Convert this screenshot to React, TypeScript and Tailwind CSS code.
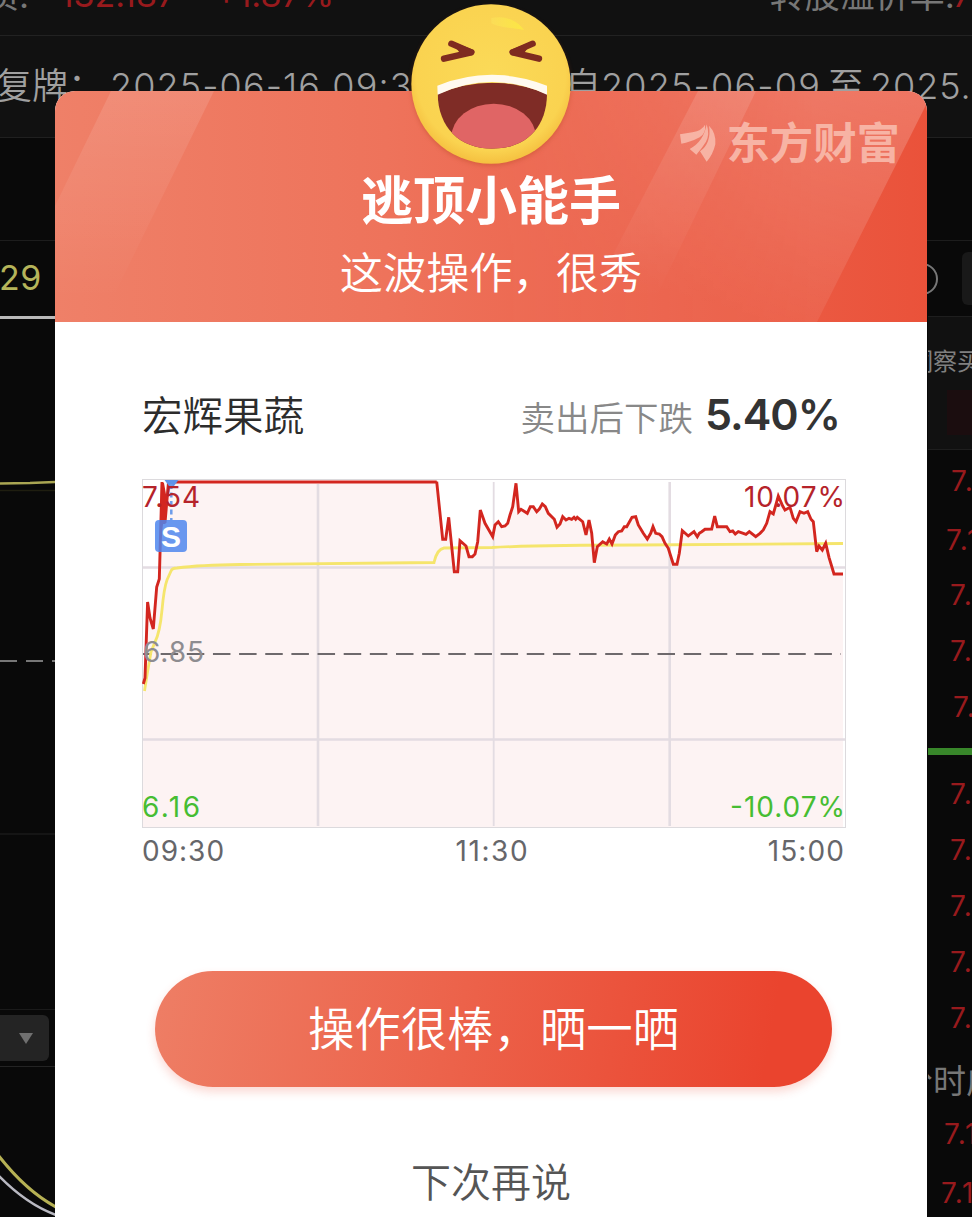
import type { ReactNode } from "react";

const LATIN = "font-['Inter','Noto_Sans_CJK_SC',sans-serif]";

type Point = [number, number];

const toPath = (points: Point[]) => points.map(([x, y]) => `${x.toFixed(1)},${y.toFixed(1)}`).join(" ");
const fromThirds = (points: Point[], ox: number, oy: number): Point[] =>
  points.map(([x, y]) => [ox + x / 3, oy + y / 3]);

const opening: Point[] = [
  [143.3, 684], [145, 678], [147.6, 602], [150, 618], [153.3, 629], [156.7, 587], [159.3, 579],
  [162, 482], [165, 523], [168.5, 482], [436.7, 482],
];

const midday: Point[] = fromThirds(
  [
    [50, 35], [68, 208], [77, 208], [86, 142], [103, 305], [113, 305], [120, 212], [138, 228], [147, 260],
    [157, 260], [165, 252], [173, 215], [181, 120], [195, 160], [218, 200], [225, 165], [235, 155], [245, 170],
    [255, 168], [263, 160], [270, 135], [278, 110], [288, 40], [296, 125], [303, 118], [322, 130], [331, 110],
    [340, 110], [350, 125], [358, 117], [367, 102], [376, 110], [385, 130], [403, 148], [411, 172], [420, 162],
    [428, 140], [438, 150], [447, 145], [455, 148], [462, 142], [467, 148], [472, 142], [488, 155], [498, 195],
    [507, 150], [515, 190], [523, 278], [532, 230], [548, 215], [560, 222], [568, 207], [576, 222], [586, 195],
    [595, 185], [605, 183], [613, 170], [620, 170],
  ],
  420,
  470,
);

const afternoon: Point[] = fromThirds(
  [
    [6, 142], [17, 140], [25, 165], [40, 190], [52, 207], [62, 190], [69, 170], [77, 190], [88, 192], [96, 200],
    [105, 220], [115, 235], [122, 258], [130, 283], [141, 283], [148, 250], [157, 182], [175, 198], [192, 185],
    [202, 200], [208, 190], [215, 185], [225, 178], [245, 177], [254, 138], [262, 170], [290, 170], [300, 185],
    [308, 183], [316, 192], [325, 185], [340, 190], [348, 193], [358, 185], [377, 200], [390, 190], [400, 180],
    [410, 160], [420, 125], [430, 132], [445, 78], [458, 108], [465, 120], [480, 112], [490, 145], [498, 155],
    [510, 125], [522, 130], [533, 125], [543, 148], [550, 155], [560, 245], [567, 228], [577, 240], [587, 220],
    [597, 262], [612, 312], [639, 312],
  ],
  630,
  470,
);

const price: Point[] = [...opening, ...midday, ...afternoon];
const average =
  "M144.500 691L147.500 672L151 652L155 642Q160 632 162 610Q164 588 167 580L171 571Q172 568 177 568Q200 565 240 564.5L434 562.5Q437 549 444 548L492 547.5Q540 545 640 545L843 543.5";

function ChartText(props: { x: number; y: number; w: number; color: string; children: ReactNode }) {
  return (
    <text
      x={props.x}
      y={props.y}
      textLength={props.w}
      lengthAdjust="spacing"
      fill={props.color}
      fontSize="28"
      fontFamily="Inter, 'Liberation Sans', sans-serif"
    >
      {props.children}
    </text>
  );
}

function PriceChart() {
  return (
    <svg className="block h-[350px] w-[706px]" viewBox="141 478 706 350">
      <rect x="142.5" y="479.5" width="703" height="348" fill="#fff" stroke="#dcdadd" />
      <polygon points={`143,827 ${toPath(price)} 843,827`} fill="#fdf3f3" />
      <g stroke="#e3dce2" strokeWidth="2.6">
        <path d="M143 567.5H845M143 739.5H845" />
        <path d="M318 484V826M669.700 482V826" />
        <path d="M493.700 482V826" strokeWidth="1.800" />
      </g>
      <path d="M143 654H841" stroke="#6e696c" strokeWidth="2" strokeDasharray="17.500 8.650" strokeDashoffset="8.500" />
      <path d={average} fill="none" stroke="#f5e56c" strokeWidth="2.800" />
      <polyline points={toPath(price)} fill="none" stroke="#d3261f" strokeWidth="2.900" strokeLinejoin="miter" strokeMiterlimit="3" />
      <path d="M161 483L164 483L167 500L165.500 524L163 524L160 548Z" fill="#d3261f" />
      <path d="M164.500 480H178.500L174 486H169Z" fill="#5f93ea" />
      <path d="M171.300 484V520" stroke="#6c9bea" strokeWidth="2.500" strokeDasharray="5 3.500" />
      <rect x="155" y="520" width="32" height="32" rx="4" fill="#4c86ee" fillOpacity=".84" />
      <text x="171" y="546.500" textAnchor="middle" fill="#fff" fontSize="30" fontWeight="700" fontFamily="'Liberation Sans', sans-serif">
        S
      </text>
      <ChartText x={142} y={507} w={58} color="#b5232a">7.54</ChartText>
      <ChartText x={744} y={507} w={101} color="#b5232a">10.07%</ChartText>
      <ChartText x={143} y={662} w={61} color="#8e8c90">6.85</ChartText>
      <ChartText x={142} y={817} w={58} color="#46bd32">6.16</ChartText>
      <ChartText x={730} y={817} w={115} color="#46bd32">-10.07%</ChartText>
    </svg>
  );
}

function LaughingFace() {
  return (
    <svg className="block h-[175px] w-[190px]" viewBox="0 0 570 525">
      <defs>
        <radialGradient id="face" cx=".5" cy=".45" r=".55">
          <stop offset="0" stopColor="#fbda58" />
          <stop offset=".85" stopColor="#fad350" />
          <stop offset="1" stopColor="#f5c040" />
        </radialGradient>
        <linearGradient id="shine" x1="0" y1="0" x2="1" y2="0">
          <stop offset="0" stopColor="#fbe05a" />
          <stop offset="1" stopColor="#fdf03c" />
        </linearGradient>
        <clipPath id="mouth">
          <path d="M113 282Q275 214 441 282C440 385 375 446 277 446C178 446 115 382 113 282Z" />
        </clipPath>
      </defs>
      <circle cx="273" cy="252" r="239" fill="url(#face)" />
      <path d="M274 54C310 46 350 58 372 90C345 84 300 84 274 70Z" fill="url(#shine)" opacity=".65" />
      <g fill="none" stroke="#7f2b20" strokeWidth="19" strokeLinecap="round" strokeLinejoin="round">
        <path d="M154 131L214 157L132 176" />
        <path d="M398 131L338 157L417 176" />
      </g>
      <path d="M152 123L222 150Q226 160 217 166L185 166Z" fill="#7f2b20" />
      <path d="M400 123L330 150Q326 160 335 166L367 166Z" fill="#7f2b20" />
      <g clipPath="url(#mouth)">
        <rect x="100" y="220" width="360" height="240" fill="#7f2c26" />
        <ellipse cx="281" cy="412" rx="127" ry="101" fill="#e06565" />
      </g>
      <path d="M112 257Q275 192 441 257V284Q275 208 113 284Z" fill="#fffaf0" />
    </svg>
  );
}

function HeaderShapes() {
  return (
    <svg className="absolute inset-0 h-full w-full" viewBox="55 91 872 231">
      <defs>
        <linearGradient id="band" x1="0" y1="0" x2="1" y2="0">
          <stop offset="0" stopColor="#ef8068" />
          <stop offset=".38" stopColor="#ee735b" />
          <stop offset=".7" stopColor="#ec614a" />
          <stop offset="1" stopColor="#ea523a" />
        </linearGradient>
        <linearGradient id="fade" x1="0" y1="0" x2="0" y2="1">
          <stop offset="0" stopColor="#fff" stopOpacity=".12" />
          <stop offset=".9" stopColor="#fff" stopOpacity="0" />
        </linearGradient>
        <linearGradient id="wide" gradientUnits="userSpaceOnUse" x1="870" y1="91" x2="800" y2="330">
          <stop offset="0" stopColor="#fff" stopOpacity=".2" />
          <stop offset="1" stopColor="#fff" stopOpacity=".06" />
        </linearGradient>
        <linearGradient id="across" x1="0" y1="0" x2="1" y2="0">
          <stop offset="0" stopColor="#000" />
          <stop offset=".75" stopColor="#fff" />
        </linearGradient>
        <mask id="reveal">
          <rect x="480" y="91" width="447" height="231" fill="url(#across)" />
        </mask>
      </defs>
      <rect x="55" y="91" width="872" height="231" fill="url(#band)" />
      <path d="M111 91H214L101 322H55V206Z" fill="url(#fade)" />
      <path d="M480 91H927V103L817 322H480Z" fill="url(#wide)" mask="url(#reveal)" />
      <path d="M698 91H756L644 322H578Z" fill="url(#fade)" />
    </svg>
  );
}

function Brand() {
  return (
    <div className="absolute top-[31px] right-[27px] flex items-center gap-[9px] text-[#f7b3a4]">
      <svg className="h-[40px] w-[38px]" viewBox="26 32 114 120" fill="currentColor">
        <path d="M29 66L66 60Q96 54 104 37Q108 62 88 75Q60 90 33 94Z" />
        <path d="M109 36Q119 66 107 88Q96 106 78 127L58 110Q100 88 109 36Z" />
        <path d="M116 40Q138 62 135 96Q128 127 109 148L89 117Q124 92 116 40Z" />
      </svg>
      <span className="text-[43.400px] leading-[42px] font-bold">东方财富</span>
    </div>
  );
}

const quotes = [
  { h: "h-[62px]", pad: "pl-[23px]", text: "7.12" },
  { h: "h-[55px]", pad: "pl-[18px]", text: "7.12" },
  { h: "h-[56px]", pad: "pl-[22px]", text: "7.11" },
  { h: "h-[56px]", pad: "pl-[22px]", text: "7.10" },
  { h: "h-[69px]", pad: "pl-[25px]", text: "7.09", cls: "pb-[14px]" },
];
const bids = ["7.08", "7.07", "7.06", "7.05", "7.04"];

function Backdrop() {
  return (
    <div className="flex h-full w-full flex-col bg-[#090909] text-[#858585]">
      <div className="flex h-9 shrink-0 overflow-hidden border-b border-[#222] bg-[#111] text-[35px] leading-[36px] whitespace-nowrap">
        <div className="-mt-[23px] -ml-[16px] w-[76px] text-[#777]">质:</div>
        <div className="-mt-[23px] w-[156px] text-[34px] text-[#981a1d]">132.187</div>
        <div className="-mt-[23px] w-[557px] text-[34px] text-[#981a1d]">+1.87%</div>
        <div className="-mt-[23px] w-[183px] text-[#777]">转股溢价率:</div>
        <div className="-mt-[23px] text-[34px] text-[#981a1d]">7</div>
      </div>
      <div className="flex h-[102px] shrink-0 items-center border-b border-[#202020] bg-[#111] pb-[2px] text-[36px] font-[350] whitespace-nowrap text-[#a0a0a0]">
        <div className="-ml-[4px] w-[114px] shrink-0">复牌：</div>
        <div className="w-[455px] shrink-0 tracking-[1.100px]">2025-06-16 09:30</div>
        <div className="w-[36px] shrink-0">自</div>
        <div className="w-[227px] shrink-0 tracking-[1.200px]">2025-06-09</div>
        <div className="w-[42px] shrink-0">至</div>
        <div className="shrink-0 tracking-[0.900px]">2025.</div>
      </div>
      <div className="h-[103px] shrink-0 border-b border-[#1d1d1d]" />
      <div className="flex h-[75px] shrink-0 items-center justify-between overflow-hidden">
        <div className="-ml-[1px] pb-[3px] text-[34px] tracking-[0.500px] text-[#b5b45a]">29</div>
        <div className="flex items-center gap-6">
          <div className="h-8 w-8 rounded-full border-2 border-[#777]" />
          <div className="h-[53px] w-[10px] rounded-l-md bg-[#191919]" />
        </div>
      </div>
      <div className="flex min-h-0 grow">
        <div className="flex w-[500px] flex-col">
          <div className="h-[3px] shrink-0 bg-[#b9b9b9]" />
          <svg className="block h-[343px] w-[55px] shrink-0" viewBox="0 319 55 343">
            <path d="M0 483.500L30 483L55 482" fill="none" stroke="#aaa653" strokeWidth="2.400" />
            <path d="M0 490.500H55" stroke="#1f1e10" strokeWidth="1.500" />
            <path d="M0 661H17M26 661H43M52 661H55" stroke="#777" strokeWidth="2" />
          </svg>
          <div className="h-[173px] shrink-0 border-b-2 border-[#151515]" />
          <div className="h-[175px] shrink-0 border-b border-[#1a1a1a]" />
          <div className="flex h-[57px] shrink-0 items-center border-b border-[#242424]">
            <div className="flex h-[46px] w-[49px] items-center justify-center rounded-r-md bg-[#242424] pl-[3px]">
              <svg className="h-[11px] w-[14px]" viewBox="0 0 14 11">
                <path d="M0 0H14L7 11Z" fill="#707070" />
              </svg>
            </div>
          </div>
          <svg className="block h-[150px] w-[55px] shrink-0" viewBox="0 1067 55 150">
            <path d="M-2 1155Q26 1191 56 1207" fill="none" stroke="#b6b154" strokeWidth="3" />
            <path d="M-2 1175Q26 1204 56 1215" fill="none" stroke="#b9b9c2" strokeWidth="2.500" />
          </svg>
        </div>
        <div className="ml-auto flex w-[44px] shrink-0 flex-col overflow-hidden whitespace-nowrap">
          <div className="flex h-[134px] shrink-0 flex-col border-t border-b border-[#1e1e1e] bg-[#111] pt-[27px] text-[24px] leading-[36px] text-[#808080]">
            <div className="-ml-[19px]">洞察买</div>
            <div className="mt-[10px] ml-[19px] h-[45px] bg-[#1b0d0f]" />
          </div>
          {quotes.map((q, i) => (
            <div key={i} className={`flex shrink-0 items-center text-[28px] tracking-[1.500px] text-[#981a1d] ${q.h} ${q.pad} ${q.cls ?? ""}`}>
              {q.text}
            </div>
          ))}
          <div className="h-[7px] shrink-0 bg-[#38872a]" />
          <div className="mt-[11px] flex shrink-0 flex-col pl-[22px] text-[28px] tracking-[1.500px] text-[#981a1d]">
            {bids.map((b) => (
              <div key={b} className="flex h-[56px] items-center">
                {b}
              </div>
            ))}
          </div>
          <div className="-ml-[28px] flex h-[72px] shrink-0 items-center text-[33px] text-[#777]">分时成交</div>
          <div className="flex h-[32px] shrink-0 items-center pl-[16px] text-[28px] tracking-[1.500px] text-[#981a1d]">7.13</div>
          <div className="flex h-[86px] shrink-0 items-center pl-[13px] text-[28px] tracking-[1.500px] text-[#981a1d]">7.13</div>
        </div>
      </div>
    </div>
  );
}

function Dialog() {
  return (
    <div className="absolute top-[91px] left-[55px] flex h-[1126px] w-[872px] flex-col overflow-hidden rounded-t-[20px] bg-white">
      <div className="relative flex h-[231px] shrink-0 flex-col items-center">
        <HeaderShapes />
        <Brand />
        <h1 className="relative mt-[79px] text-[52px] leading-[64px] font-semibold text-white">逃顶小能手</h1>
        <p className="relative mt-[14px] text-[43.200px] leading-[50px] font-[350] text-white">这波操作，很秀</p>
      </div>
      <div className="flex h-[156px] shrink-0 items-center justify-between pt-[33px] pr-[88px] pl-[87px]">
        <div className="pt-[1px] text-[40.500px] font-[350] text-[#2c2c2c]">宏辉果蔬</div>
        <div className="flex items-center gap-[12px]">
          <span className="pt-[4px] text-[34.500px] font-[350] text-[#888]">卖出后下跌</span>
          <span className="w-[134px] pb-[4px] text-[43px] font-semibold tracking-[-1px] text-[#333]">5.40%</span>
        </div>
      </div>
      <div className="flex shrink-0 flex-col pl-[86px]">
        <PriceChart />
        <div className="flex w-[704px] justify-between pl-[1px] text-[28px] leading-[46px] text-[#66666a]">
          <span className="tracking-[1px]">09:30</span>
          <span className="-ml-[8px] tracking-[1.600px]">11:30</span>
          <span className="tracking-[1.100px]">15:00</span>
        </div>
      </div>
      <button className="mt-[97px] ml-[100px] flex h-[116px] w-[677px] shrink-0 items-center justify-center rounded-full bg-linear-[100deg,#ee7e65_0%,#ec624a_45%,#ea442e_90%] pt-[2px] text-[46.400px] font-[350] text-white shadow-[0_5px_10px_rgba(235,80,60,0.22)]">
        操作很棒，晒一晒
      </button>
      <button className="mt-[66px] flex h-[60px] w-[872px] shrink-0 items-center justify-center text-[40px] font-[350] text-[#555]">
        下次再说
      </button>
    </div>
  );
}

export default function App() {
  return (
    <div className={`relative h-[1217px] w-[972px] overflow-hidden ${LATIN}`}>
      <Backdrop />
      <Dialog />
      <div className="absolute top-0 left-[400px] drop-shadow-[0_2px_2px_rgba(170,60,20,0.3)]">
        <LaughingFace />
      </div>
    </div>
  );
}
